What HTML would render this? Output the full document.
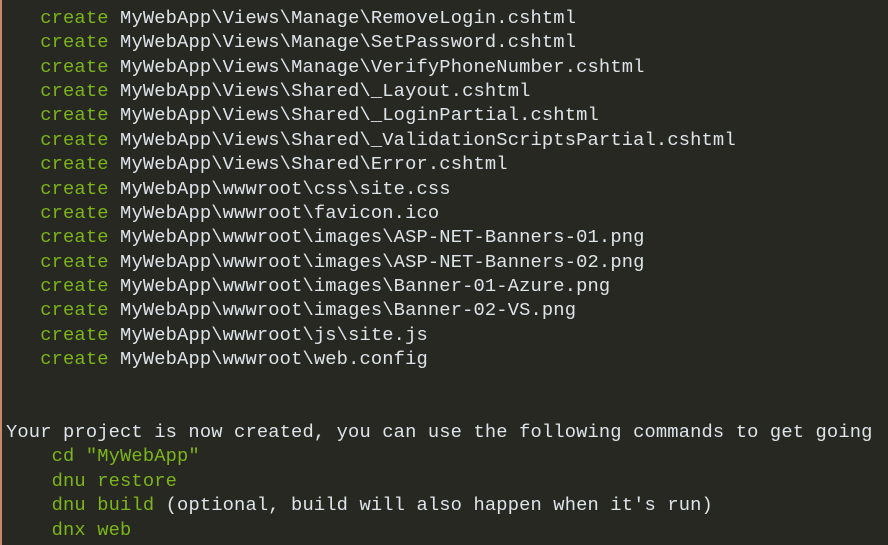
<html><head><style>
body{margin:0;width:888px;height:545px;overflow:hidden;background:#272822;}
.b{position:absolute;left:0;top:0;width:2px;height:545px;background:#c98a6a;}
pre{position:absolute;left:6px;top:6px;margin:0;font-family:"Liberation Mono",monospace;font-size:18.75px;letter-spacing:0.15px;line-height:24.36px;color:#dde4ea;}
.g{color:#7cb518;}
</style></head><body><div class="b"></div><pre>   <span class="g">create</span> MyWebApp\Views\Manage\RemoveLogin.cshtml
   <span class="g">create</span> MyWebApp\Views\Manage\SetPassword.cshtml
   <span class="g">create</span> MyWebApp\Views\Manage\VerifyPhoneNumber.cshtml
   <span class="g">create</span> MyWebApp\Views\Shared\_Layout.cshtml
   <span class="g">create</span> MyWebApp\Views\Shared\_LoginPartial.cshtml
   <span class="g">create</span> MyWebApp\Views\Shared\_ValidationScriptsPartial.cshtml
   <span class="g">create</span> MyWebApp\Views\Shared\Error.cshtml
   <span class="g">create</span> MyWebApp\wwwroot\css\site.css
   <span class="g">create</span> MyWebApp\wwwroot\favicon.ico
   <span class="g">create</span> MyWebApp\wwwroot\images\ASP-NET-Banners-01.png
   <span class="g">create</span> MyWebApp\wwwroot\images\ASP-NET-Banners-02.png
   <span class="g">create</span> MyWebApp\wwwroot\images\Banner-01-Azure.png
   <span class="g">create</span> MyWebApp\wwwroot\images\Banner-02-VS.png
   <span class="g">create</span> MyWebApp\wwwroot\js\site.js
   <span class="g">create</span> MyWebApp\wwwroot\web.config


Your project is now created, you can use the following commands to get going
    <span class="g">cd "MyWebApp"</span>
    <span class="g">dnu restore</span>
    <span class="g">dnu build</span> (optional, build will also happen when it's run)
    <span class="g">dnx web</span>
</pre></body></html>
